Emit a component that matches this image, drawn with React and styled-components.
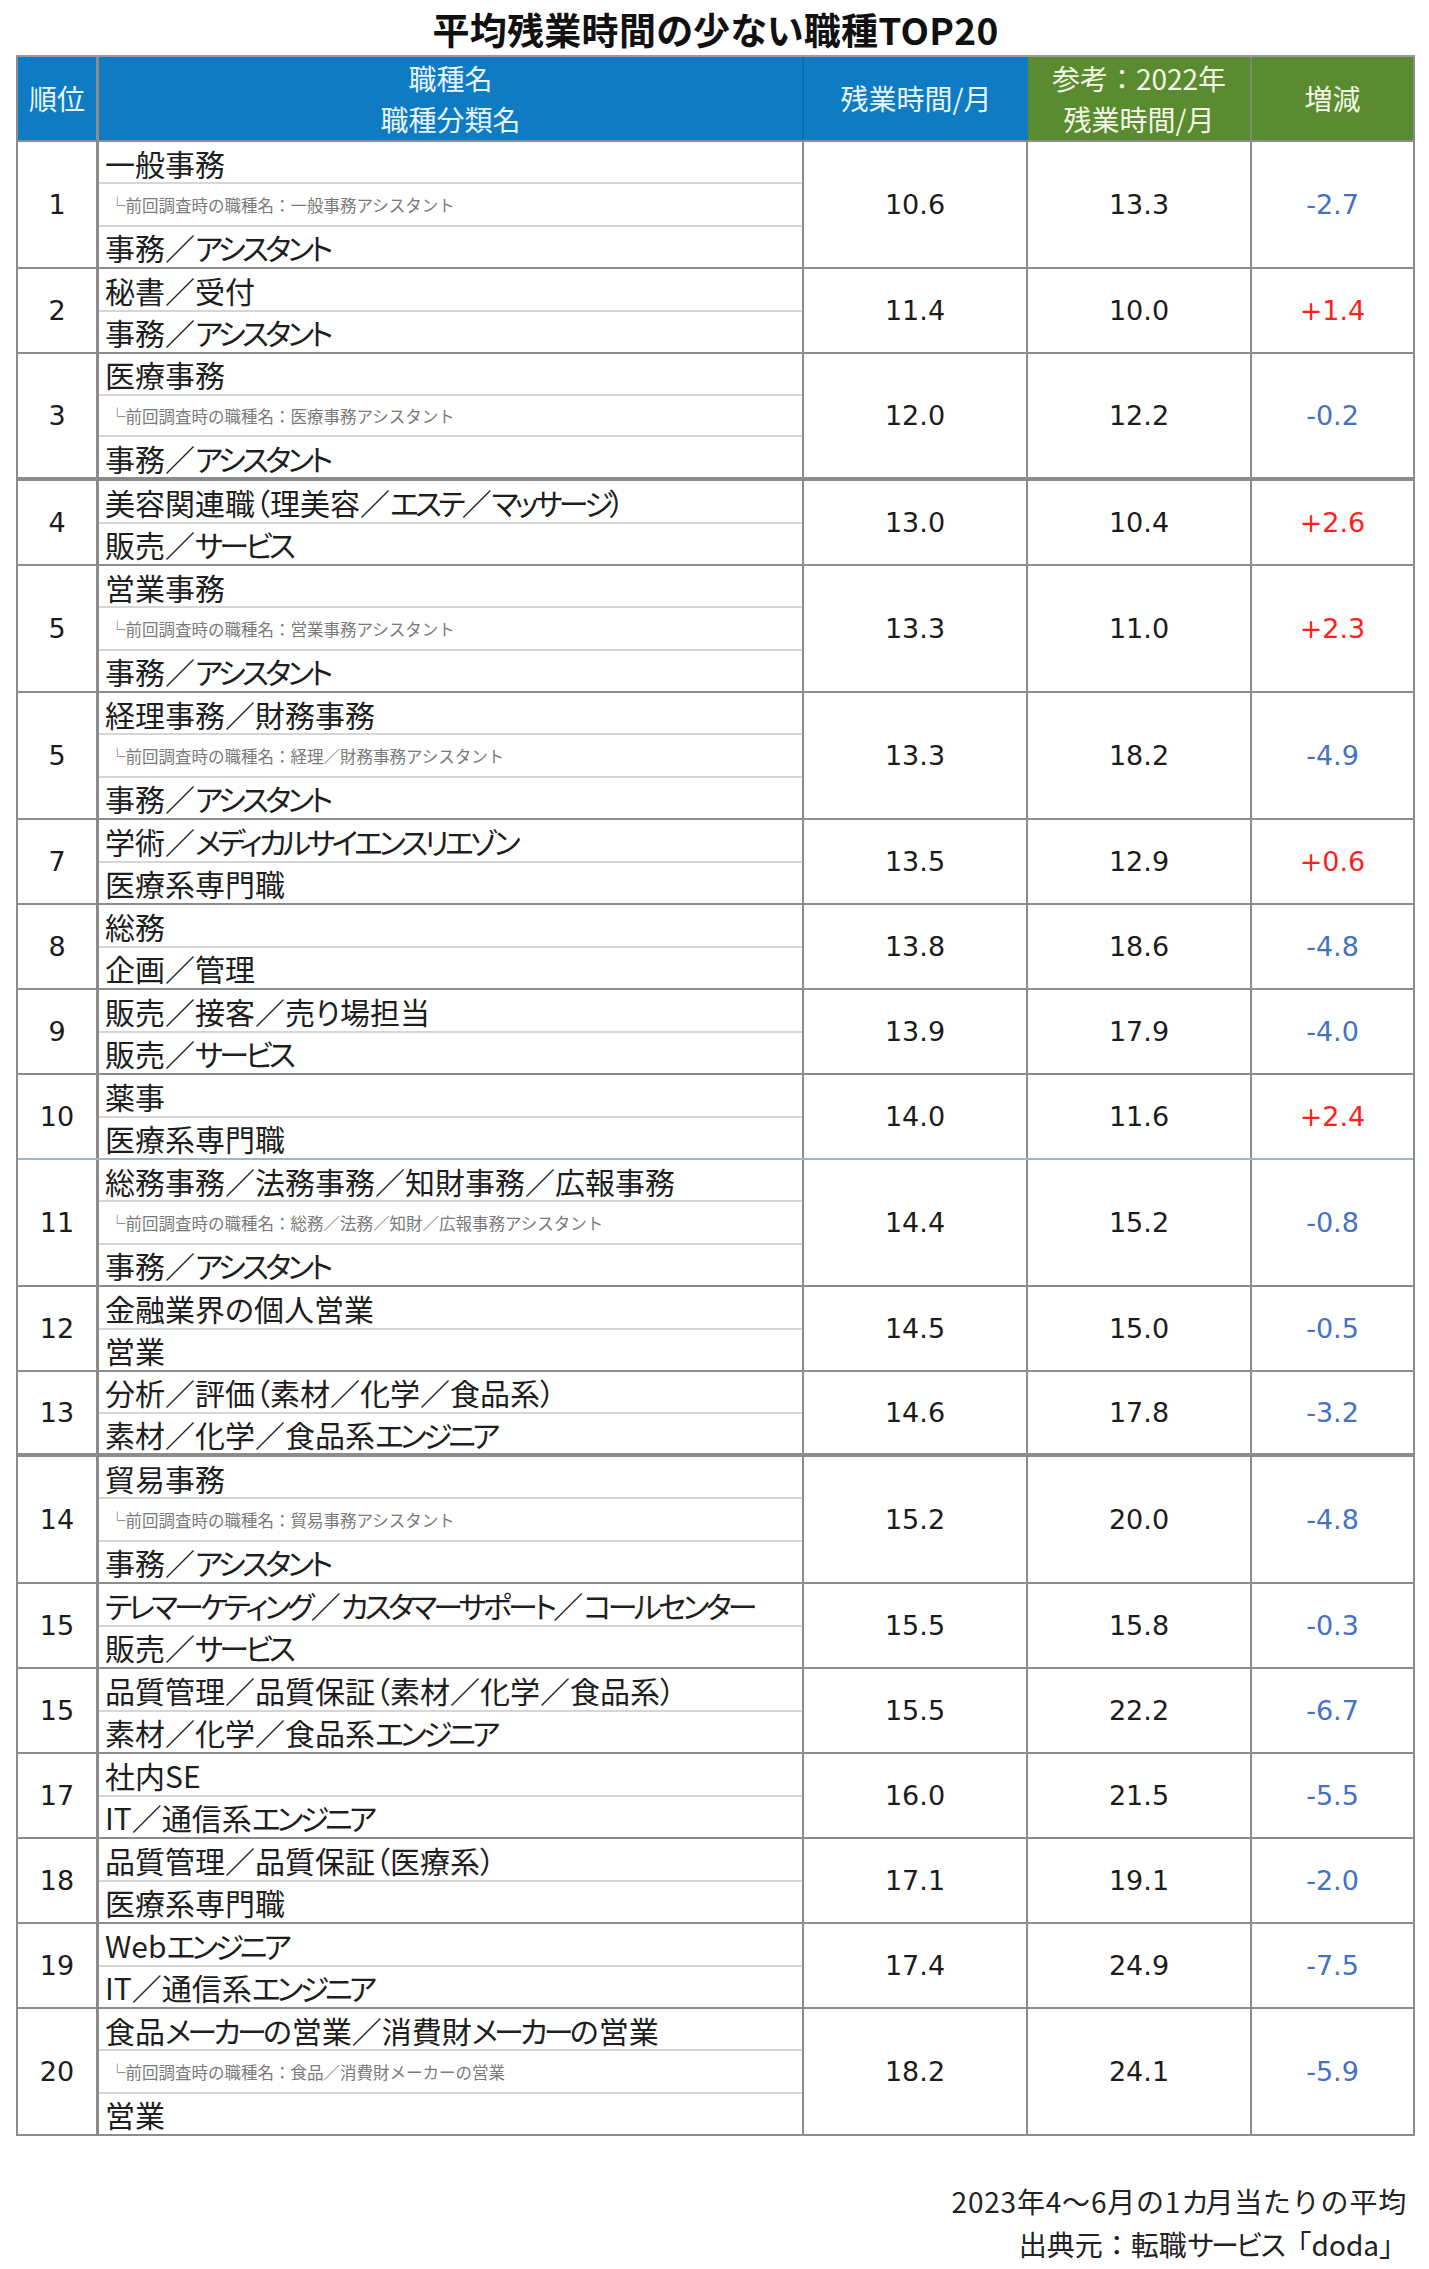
import React from 'react';
import styled, { createGlobalStyle } from 'styled-components';

const GlobalStyle = createGlobalStyle`
    body {
        margin: 0;
        background: #ffffff;
        font-family: "Noto Sans CJK JP", sans-serif;
        color: #222222;
    }
`;

const jobs = [
    { rank: '1', name: '一般事務', note: '└前回調査時の職種名：一般事務アシスタント', cat: '事務／アシスタント', now: '10.6', prev: '13.3', diff: '-2.7' },
    { rank: '2', name: '秘書／受付', cat: '事務／アシスタント', now: '11.4', prev: '10.0', diff: '+1.4' },
    { rank: '3', name: '医療事務', note: '└前回調査時の職種名：医療事務アシスタント', cat: '事務／アシスタント', now: '12.0', prev: '12.2', diff: '-0.2', sep: 'thick' },
    { rank: '4', name: '美容関連職（理美容／エステ／マッサージ）', cat: '販売／サービス', now: '13.0', prev: '10.4', diff: '+2.6' },
    { rank: '5', name: '営業事務', note: '└前回調査時の職種名：営業事務アシスタント', cat: '事務／アシスタント', now: '13.3', prev: '11.0', diff: '+2.3' },
    { rank: '5', name: '経理事務／財務事務', note: '└前回調査時の職種名：経理／財務事務アシスタント', cat: '事務／アシスタント', now: '13.3', prev: '18.2', diff: '-4.9' },
    { rank: '7', name: '学術／メディカルサイエンスリエゾン', cat: '医療系専門職', now: '13.5', prev: '12.9', diff: '+0.6' },
    { rank: '8', name: '総務', cat: '企画／管理', now: '13.8', prev: '18.6', diff: '-4.8' },
    { rank: '9', name: '販売／接客／売り場担当', cat: '販売／サービス', now: '13.9', prev: '17.9', diff: '-4.0' },
    { rank: '10', name: '薬事', cat: '医療系専門職', now: '14.0', prev: '11.6', diff: '+2.4', sep: 'blue' },
    { rank: '11', name: '総務事務／法務事務／知財事務／広報事務', note: '└前回調査時の職種名：総務／法務／知財／広報事務アシスタント', cat: '事務／アシスタント', now: '14.4', prev: '15.2', diff: '-0.8' },
    { rank: '12', name: '金融業界の個人営業', cat: '営業', now: '14.5', prev: '15.0', diff: '-0.5' },
    { rank: '13', name: '分析／評価（素材／化学／食品系）', cat: '素材／化学／食品系エンジニア', now: '14.6', prev: '17.8', diff: '-3.2', sep: 'thick' },
    { rank: '14', name: '貿易事務', note: '└前回調査時の職種名：貿易事務アシスタント', cat: '事務／アシスタント', now: '15.2', prev: '20.0', diff: '-4.8' },
    { rank: '15', name: 'テレマーケティング／カスタマーサポート／コールセンター', cat: '販売／サービス', now: '15.5', prev: '15.8', diff: '-0.3' },
    { rank: '15', name: '品質管理／品質保証（素材／化学／食品系）', cat: '素材／化学／食品系エンジニア', now: '15.5', prev: '22.2', diff: '-6.7' },
    { rank: '17', name: '社内SE', cat: 'IT／通信系エンジニア', now: '16.0', prev: '21.5', diff: '-5.5' },
    { rank: '18', name: '品質管理／品質保証（医療系）', cat: '医療系専門職', now: '17.1', prev: '19.1', diff: '-2.0' },
    { rank: '19', name: 'Webエンジニア', cat: 'IT／通信系エンジニア', now: '17.4', prev: '24.9', diff: '-7.5' },
    { rank: '20', name: '食品メーカーの営業／消費財メーカーの営業', note: '└前回調査時の職種名：食品／消費財メーカーの営業', cat: '営業', now: '18.2', prev: '24.1', diff: '-5.9' },
];

// katakana runs are narrower in the original (proportional gothic)
function withKana(text) {
    return text.split(/([\u30A0-\u30FF]+)/).map((part, i) =>
        /[\u30A0-\u30FF]/.test(part) ? <Kana key={i}>{part}</Kana> : part
    );
}

function App() {
    return (
        <>
            <GlobalStyle />
            <Page>
                <Title>平均残業時間の少ない職種TOP20</Title>
                <Table>
                    <HeaderRow>
                        <HeadCell $bg="#0f7bc3" $line="3px solid #8c8c8c">順位</HeadCell>
                        <HeadCell $bg="#0f7bc3" $line="2px solid #0b6aa8">
                            <span>職種名</span>
                            <span>職種分類名</span>
                        </HeadCell>
                        <HeadCell $bg="#0f7bc3">残業時間/月</HeadCell>
                        <HeadCell $bg="#5b8b30" $green $line="2px solid #7d8a70">
                            <span>参考：2022年</span>
                            <span>残業時間/月</span>
                        </HeadCell>
                        <HeadCell $bg="#5b8b30" $green>増減</HeadCell>
                    </HeaderRow>
                    {jobs.map((job, i) => {
                        const lines = job.note ? 3 : 2;
                        return (
                            <Row key={i} $lines={lines} $sep={job.sep}>
                                <RankCell>{job.rank}</RankCell>
                                <NameCell>
                                    <SubLine>{withKana(job.name)}</SubLine>
                                    {job.note && <SubLine $note>{job.note}</SubLine>}
                                    <SubLine>{withKana(job.cat)}</SubLine>
                                </NameCell>
                                <ValueCell>{job.now}</ValueCell>
                                <ValueCell>{job.prev}</ValueCell>
                                <ValueCell $tone={job.diff[0] === '+' ? 'up' : 'down'} $last>
                                    {job.diff}
                                </ValueCell>
                            </Row>
                        );
                    })}
                </Table>
                <Footer>
                    <FootLine $spread>{withKana('2023年4～6月の1カ月当たりの平均')}</FootLine>
                    <FootLine>{withKana('出典元：転職サービス「doda」')}</FootLine>
                </Footer>
            </Page>
        </>
    );
}

const Page = styled.div`
    width: 1429px;
    padding: 0 0 0 16px;
    box-sizing: border-box;
`;

const Title = styled.h1`
    width: 1399px;
    height: 55px;
    margin: 0;
    text-align: center;
    font-size: 37px;
    line-height: 58px;
    font-weight: 700;
    color: #111111;
    font-feature-settings: "palt";
    letter-spacing: 0.3px;
`;

const Table = styled.div`
    width: 1399px;
    box-sizing: border-box;
    border-top: 2px solid #9a9a9a;
    border-left: 2px solid #8c8c8c;
    border-right: 2px solid #8c8c8c;
`;

const columns = '81px 705px 224px 224px 161px';

const HeaderRow = styled.div`
    display: grid;
    grid-template-columns: ${columns};
    height: 85px;
    border-bottom: 2px solid #8c8c8c;
    box-sizing: border-box;
`;

const HeadCell = styled.div`
    display: flex;
    flex-direction: column;
    align-items: center;
    justify-content: center;
    background: ${({ $bg }) => $bg};
    color: ${({ $green }) => ($green ? '#f1f7e4' : '#e6f5ff')};
    border-right: ${({ $line }) => $line || 'none'};
    box-sizing: border-box;
    font-size: 28px;
    line-height: 41px;
    span {
        display: block;
    }
`;

const Row = styled.div`
    display: grid;
    grid-template-columns: ${columns};
    height: ${({ $lines }) => ($lines === 3 ? 127 : 85)}px;
    box-sizing: border-box;
    border-bottom: ${({ $sep }) =>
        $sep === 'thick' ? '4px solid #8c8c8c' : $sep === 'blue' ? '2px solid #9fb6c6' : '2px solid #8c8c8c'};
`;

const RankCell = styled.div`
    display: flex;
    align-items: center;
    justify-content: center;
    border-right: 3px solid #8c8c8c;
    box-sizing: border-box;
    font-family: "DejaVu Sans", sans-serif;
    font-size: 27px;
    color: #1c1c1c;
`;

const NameCell = styled.div`
    display: flex;
    flex-direction: column;
    border-right: 2px solid #8c8c8c;
    box-sizing: border-box;
    min-width: 0;
    min-height: 0;
`;

const SubLine = styled.div`
    flex: 1 1 0;
    min-height: 0;
    display: flex;
    align-items: center;
    padding-top: 1px;
    box-sizing: border-box;
    white-space: nowrap;
    line-height: 1;
    font-feature-settings: ${({ $note }) => ($note ? 'normal' : '"palt"')};
    font-size: ${({ $note }) => ($note ? '16.5px' : '30px')};
    color: ${({ $note }) => ($note ? '#7a7a7a' : '#1e1e1e')};
    padding-left: ${({ $note }) => ($note ? '10px' : '6px')};
    & + & {
        border-top: 2px solid #d6d6d6;
    }
`;

const Kana = styled.span`
    letter-spacing: -3.8px;
`;

const ValueCell = styled.div`
    display: flex;
    align-items: center;
    justify-content: center;
    border-right: ${({ $last }) => ($last ? 'none' : '2px solid #8c8c8c')};
    box-sizing: border-box;
    font-family: "DejaVu Sans", sans-serif;
    font-size: 27px;
    color: ${({ $tone }) => ($tone === 'up' ? '#ff1f1f' : $tone === 'down' ? '#4472c4' : '#1c1c1c')};
`;

const Footer = styled.div`
    width: 1391px;
    margin-top: 44px;
    display: flex;
    flex-direction: column;
    align-items: flex-end;
    font-size: 28px;
    line-height: 43px;
    color: #222222;
`;

const FootLine = styled.span`
    display: block;
    letter-spacing: ${({ $spread }) => ($spread ? '0.8px' : '0')};
`;

export default App;
